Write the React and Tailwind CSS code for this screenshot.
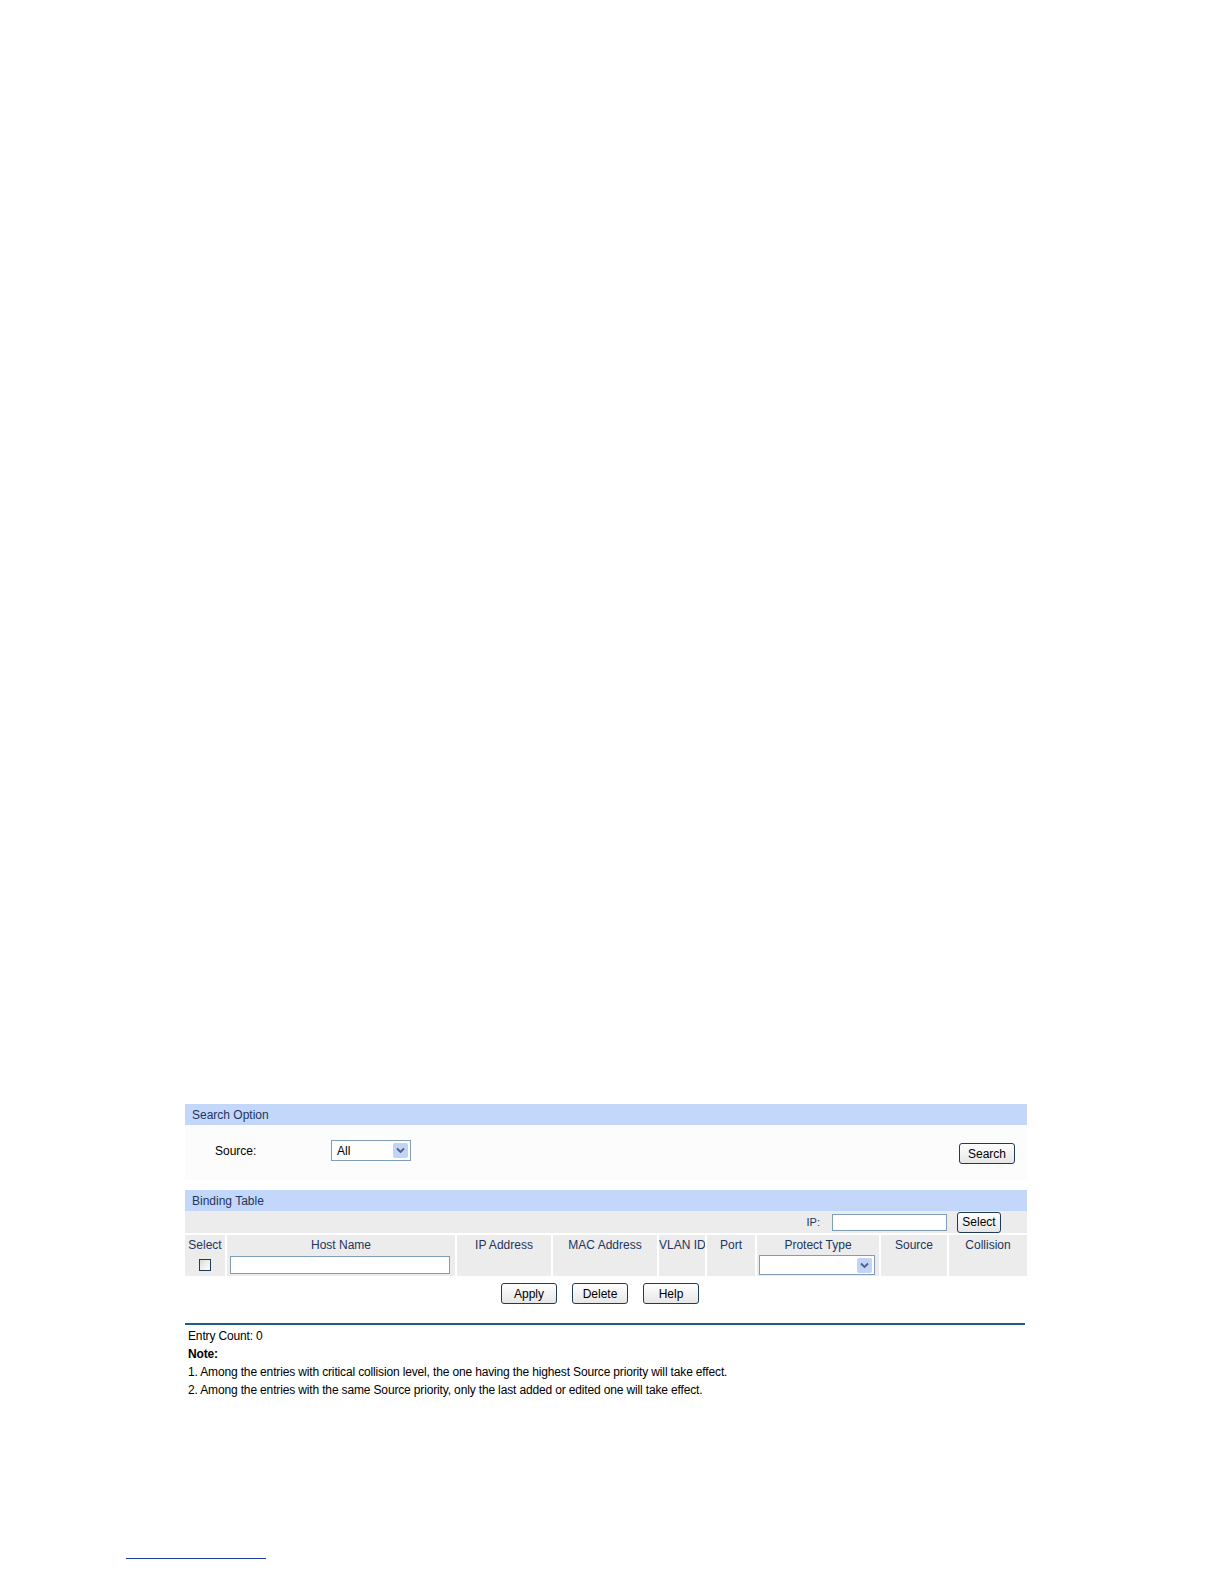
import React from 'react'

const font = { fontFamily: '"Liberation Sans", Arial, sans-serif' }

const Btn = ({ children, className = '' }) => (
    <button
        className={`h-[21px] rounded-[3px] border border-[#1d3c5c] bg-gradient-to-b from-white to-[#e6e6e6] text-[12px] leading-none text-black ${className}`}
    >
        {children}
    </button>
)

const SelectBox = ({ value, className = '' }) => (
    <div className={`flex items-center justify-between border border-[#7f9db9] bg-white pl-[5px] pr-[2px] ${className}`}>
        <span className="text-[12px] text-black">{value}</span>
        <span className="flex h-[15px] w-[15px] items-center justify-center rounded-[2px] bg-[#c2d3f5]">
            <svg width="9" height="7" viewBox="0 0 9 7">
                <path d="M1 1.5 L4.5 5 L8 1.5" fill="none" stroke="#4d6185" strokeWidth="1.8" />
            </svg>
        </span>
    </div>
)

const cols = [
    { label: 'Select', w: 'w-[41px]' },
    { label: 'Host Name', w: 'w-[230px]' },
    { label: 'IP Address', w: 'w-[96px]' },
    { label: 'MAC Address', w: 'w-[106px]' },
    { label: 'VLAN ID', w: 'w-[48px]' },
    { label: 'Port', w: 'w-[50px]' },
    { label: 'Protect Type', w: 'w-[124px]' },
    { label: 'Source', w: 'w-[68px]' },
    { label: 'Collision', w: 'w-[79px]' },
]

export default function App() {
    return (
        <div className="relative h-[1584px] w-full overflow-hidden bg-white pt-[1104px]" style={font}>
            <div className="ml-[185px] w-[842px]">
                {/* Search Option */}
                <div className="flex h-[21px] items-center bg-[#c3d7fb] pl-[7px] text-[12px] text-[#22355e]">Search Option</div>
                <div className="flex h-[55px] items-start bg-[#fcfcfc] pt-[15px]">
                    <span className="ml-[30px] mt-[2px] w-[116px] text-[12px] text-black">Source:</span>
                    <SelectBox value="All" className="h-[21px] w-[80px]" />
                    <Btn className="ml-auto mr-[12px] mt-[3px] w-[56px]">Search</Btn>
                </div>

                {/* Binding Table */}
                <div className="mt-[10px] flex h-[21px] items-center bg-[#c3d7fb] pl-[7px] text-[12px] text-[#22355e]">Binding Table</div>
                <div className="flex h-[22px] items-center justify-end bg-[#ececec] pr-[26px]">
                    <span className="mr-[12px] text-[11px] text-[#22355e]">IP:</span>
                    <div className="h-[17px] w-[115px] border border-[#7f9db9] bg-white"></div>
                    <Btn className="ml-[10px] h-[19px] w-[44px]">Select</Btn>
                </div>
                <table className="w-full table-fixed border-collapse">
                    <thead>
                        <tr className="h-[20px] bg-[#ececec]">
                            {cols.map((c) => (
                                <th key={c.label} className={`${c.w} overflow-hidden whitespace-nowrap border-x-2 border-t-2 border-white p-0 text-center text-[12px] font-normal text-[#22355e] first:border-l-0 last:border-r-0`}>
                                    {c.label}
                                </th>
                            ))}
                        </tr>
                    </thead>
                    <tbody>
                        <tr className="h-[22px] bg-[#ececec]">
                            <td className="border-x-2 border-white border-l-0 p-0">
                                <div className="mx-auto h-[12px] w-[12px] border border-[#1c3c5c] bg-gradient-to-br from-[#dcdcd6] to-white"></div>
                            </td>
                            <td className="border-x-2 border-white p-0">
                                <div className="ml-[3px] h-[18px] w-[220px] border border-[#7f9db9] bg-white"></div>
                            </td>
                            <td className="border-x-2 border-white p-0"></td>
                            <td className="border-x-2 border-white p-0"></td>
                            <td className="border-x-2 border-white p-0"></td>
                            <td className="border-x-2 border-white p-0"></td>
                            <td className="border-x-2 border-white p-0">
                                <SelectBox value="" className="ml-[2px] h-[20px] w-[116px]" />
                            </td>
                            <td className="border-x-2 border-white p-0"></td>
                            <td className="border-x-2 border-white border-r-0 p-0"></td>
                        </tr>
                    </tbody>
                </table>
                <div className="flex justify-center gap-[15px] pt-[7px] pr-[12px]">
                    <Btn className="w-[56px]">Apply</Btn>
                    <Btn className="w-[56px]">Delete</Btn>
                    <Btn className="w-[56px]">Help</Btn>
                </div>
                <div className="mt-[19px] h-[2px] w-[840px] bg-[#1f5b87]"></div>
                <div className="pl-[3px] pt-[2px] text-[12px] leading-[18px] tracking-[-0.15px] text-black">
                    <p>Entry Count: 0</p>
                    <p className="font-bold">Note:</p>
                    <p>1. Among the entries with critical collision level, the one having the highest Source priority will take effect.</p>
                    <p>2. Among the entries with the same Source priority, only the last added or edited one will take effect.</p>
                </div>
            </div>
            <div className="absolute left-[126px] top-[1558px] h-px w-[140px] bg-[#1f3f9f]"></div>
        </div>
    )
}
